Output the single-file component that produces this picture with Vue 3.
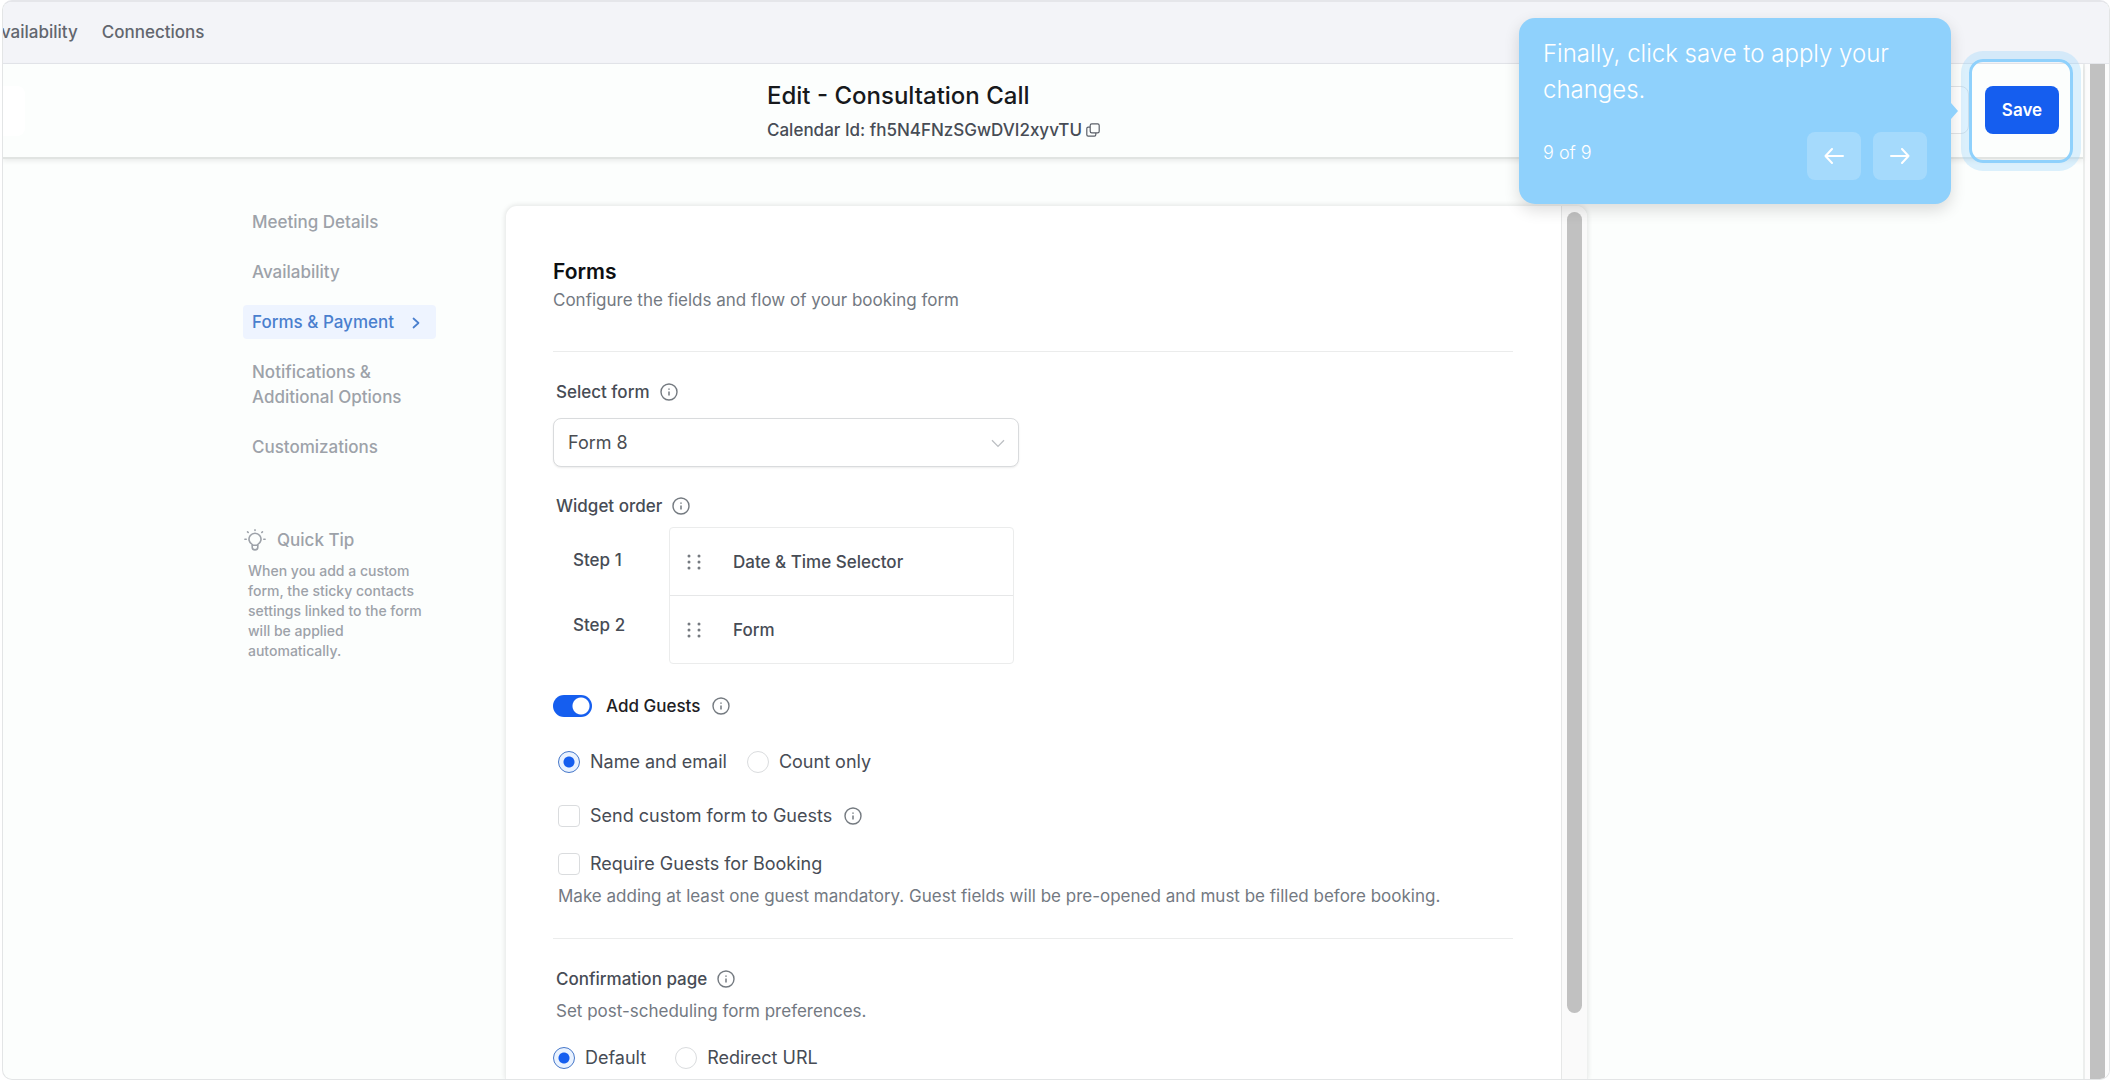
<script setup>
import { ref } from 'vue'

const navItems = ['Meeting Details', 'Availability', 'Forms & Payment', 'Notifications & Additional Options', 'Customizations']
const activeItem = 'Forms & Payment'
const widgets = ['Date & Time Selector', 'Form']
const selectedForm = ref('Form 8')
const addGuests = ref(true)
const guestMode = ref('name')
const sendCustom = ref(false)
const requireGuests = ref(false)
const confirmation = ref('default')
</script>

<template>
  <div class="frame">
    <svg class="defs" aria-hidden="true">
      <symbol id="info" viewBox="0 0 18 18">
        <circle cx="9" cy="9" r="8" fill="none" stroke="currentColor" stroke-width="1.4" />
        <path d="M9 8.4V12.4M9 5.4V6.8" fill="none" stroke="currentColor" stroke-width="1.5" />
      </symbol>
    </svg>

    <nav class="topnav">
      <a href="#" class="cut">Availability</a>
      <a href="#">Connections</a>
    </nav>

    <div class="viewport">
      <div class="page">
        <header class="header">
          <button class="back" aria-label="Back"></button>
          <div class="heading">
            <h1>Edit - Consultation Call</h1>
            <p>
              Calendar Id: fh5N4FNzSGwDVI2xyvTU
              <button class="copy" aria-label="Copy calendar id">
                <svg width="14" height="14" viewBox="0 0 14 14" fill="none" stroke="currentColor" stroke-width="1.2">
                  <rect x="4.2" y="0.8" width="9" height="9" rx="1.6" />
                  <path d="M4 4.2H2.2Q.8 4.2 .8 5.6V11.8Q.8 13.2 2.2 13.2H8.4Q9.8 13.2 9.8 11.8V10" />
                </svg>
              </button>
            </p>
          </div>
          <div class="actions">
            <button class="cancel" aria-label="Cancel"></button>
            <div class="save-wrap">
              <button class="save">Save</button>
              <span class="ring"></span>
            </div>
          </div>
        </header>

        <main class="main">
          <aside class="sidebar">
            <ul>
              <li v-for="item in navItems" :key="item">
                <a href="#" :class="{ active: item === activeItem }">
                  <span>{{ item }}</span>
                  <svg v-if="item === activeItem" width="8" height="12" viewBox="0 0 8 12" fill="none" stroke="currentColor" stroke-width="1.7" stroke-linecap="round" stroke-linejoin="round">
                    <path d="M1.5 1.5L6.5 6L1.5 10.5" />
                  </svg>
                </a>
              </li>
            </ul>
            <section class="tip">
              <h2>
                <svg width="22" height="22" viewBox="0 0 22 22" fill="none" stroke="currentColor" stroke-width="1.6" stroke-linecap="round" stroke-linejoin="round">
                  <path d="M8.4 16.2V15.6A6 6 0 1 1 13.6 15.6V16.2" />
                  <path d="M8.2 16.2H13.8V18.4Q13.6 20.9 11 20.9Q8.4 20.9 8.2 18.4Z" />
                  <path d="M11 .9V1.4M.9 10.2H2.2M19.8 10.2H21.1M3.6 2.9L4.2 3.5M18.4 2.9L17.8 3.5" />
                </svg>
                Quick Tip
              </h2>
              <p>When you add a custom form, the sticky contacts settings linked to the form will be applied automatically.</p>
            </section>
          </aside>

          <div class="card">
            <div class="content">
              <h2 class="title">Forms</h2>
              <p class="muted">Configure the fields and flow of your booking form</p>
              <hr class="first" />

              <div class="label">
                <label for="form">Select form</label>
                <svg class="info"><use href="#info" /></svg>
              </div>
              <div class="select">
                <select id="form" v-model="selectedForm">
                  <option>Form 8</option>
                </select>
                <svg width="14" height="9" viewBox="0 0 14 9" fill="none" stroke="currentColor" stroke-width="1.3">
                  <path d="M1 1.2L7 7.4L13 1.2" />
                </svg>
              </div>

              <div class="label widget-label">
                <span>Widget order</span>
                <svg class="info"><use href="#info" /></svg>
              </div>
              <div class="order">
                <div class="steps">
                  <span>Step 1</span>
                  <span>Step 2</span>
                </div>
                <ul class="widgets">
                  <li v-for="w in widgets" :key="w">
                    <svg width="14" height="16" viewBox="0 0 14 16" fill="currentColor">
                      <circle cx="2" cy="2" r="1.5" /><circle cx="12" cy="2" r="1.5" />
                      <circle cx="2" cy="8" r="1.5" /><circle cx="12" cy="8" r="1.5" />
                      <circle cx="2" cy="14" r="1.5" /><circle cx="12" cy="14" r="1.5" />
                    </svg>
                    {{ w }}
                  </li>
                </ul>
              </div>

              <div class="row guests">
                <input id="guests" v-model="addGuests" class="switch" type="checkbox" role="switch" />
                <label for="guests">Add Guests</label>
                <svg class="info"><use href="#info" /></svg>
              </div>

              <div class="row inset modes">
                <input id="m-name" v-model="guestMode" type="radio" value="name" />
                <label for="m-name">Name and email</label>
                <input id="m-count" v-model="guestMode" type="radio" value="count" />
                <label for="m-count">Count only</label>
              </div>
              <div class="row inset send">
                <input id="send" v-model="sendCustom" type="checkbox" />
                <label for="send">Send custom form to Guests</label>
                <svg class="info"><use href="#info" /></svg>
              </div>
              <div class="row inset require">
                <input id="require" v-model="requireGuests" type="checkbox" />
                <label for="require">Require Guests for Booking</label>
              </div>
              <p class="muted inset require-note">Make adding at least one guest mandatory. Guest fields will be pre-opened and must be filled before booking.</p>
              <hr class="second" />

              <div class="label">
                <span>Confirmation page</span>
                <svg class="info"><use href="#info" /></svg>
              </div>
              <p class="muted note">Set post-scheduling form preferences.</p>
              <div class="row confirm">
                <input id="c-default" v-model="confirmation" type="radio" value="default" />
                <label for="c-default">Default</label>
                <input id="c-url" v-model="confirmation" type="radio" value="url" />
                <label for="c-url">Redirect URL</label>
              </div>
            </div>
            <div class="card-scroll"><div class="thumb"></div></div>
          </div>
        </main>
      </div>
      <div class="page-scroll"><div class="thumb"></div></div>
    </div>

    <div class="coach" role="dialog" aria-label="Tour">
      <p>Finally, click save to apply your changes.</p>
      <div class="coach-foot">
        <span>9 of 9</span>
        <div class="coach-buttons">
          <button aria-label="Previous">
            <svg width="20" height="16" viewBox="0 0 20 16"><path d="M19 8H1.5M8 1L1.5 8L8 15" /></svg>
          </button>
          <button aria-label="Next">
            <svg width="20" height="16" viewBox="0 0 20 16"><path d="M1 8H18.5M12 1L18.5 8L12 15" /></svg>
          </button>
        </div>
      </div>
    </div>
  </div>
</template>

<style>
body { background: #fff; }
</style>

<style scoped>
* { box-sizing: border-box; }
h1, h2, p, ul { margin: 0; padding: 0; }
ul { list-style: none; }
button { border: 0; padding: 0; background: none; color: inherit; font: inherit; }
a { color: inherit; text-decoration: none; }

.frame {
  position: relative;
  display: flex;
  flex-direction: column;
  height: 100vh;
  margin: 0 2px;
  border: 1px solid #e3e5e6;
  border-top: 2px solid #e5e6ea;
  border-radius: 10px;
  overflow: hidden;
  background: #fcfefd;
  color: #474c55;
  font: 500 17px/24px Inter, "Liberation Sans", sans-serif;
}
.defs { position: absolute; width: 0; height: 0; }

.topnav {
  display: flex;
  flex: none;
  align-items: center;
  gap: 24px;
  height: 62px;
  padding-bottom: 2px;
  border-bottom: 1px solid #e4e6eb;
  background: #f3f4f8;
  color: #62666e;
}
.cut { margin-left: -13px; }

.viewport { display: flex; flex: 1; min-height: 0; }
.page { display: flex; flex: 1; flex-direction: column; min-width: 0; }
.page-scroll {
  width: 26px;
  padding: 0 4px 0 5px;
  border-left: 2px solid #eceeed;
  background: #fcfcfc;
}
.page-scroll .thumb { height: 100%; background: #c1c1c1; }

.header {
  position: relative;
  display: flex;
  flex: none;
  align-items: center;
  height: 95px;
  border-bottom: 2px solid #e1e4e2;
  box-shadow: 0 2px 5px rgba(0, 0, 0, 0.08);
}
.back { width: 22px; height: 50px; border-radius: 0 8px 8px 0; background: #fff; }
.heading { margin: 2px 0 0 742px; }
h1 { color: #17191c; font-size: 24px; font-weight: 500; line-height: 36px; }
.heading p { display: flex; align-items: center; gap: 4px; line-height: 32px; }
.copy { display: flex; color: #5a5f68; }
.actions { display: flex; gap: 16px; margin: 0 0 2px auto; padding-right: 24px; }
.cancel { width: 96px; height: 48px; border: 1px solid #e2e4e6; border-radius: 8px; background: #fff; }
.save-wrap { position: relative; }
.save { width: 74px; height: 48px; border-radius: 8px; background: #155eef; color: #fff; font-size: 17px; font-weight: 600; }
.ring {
  position: absolute;
  inset: -27px -14px -29px -16px;
  border: 3px solid #8fd1fc;
  border-radius: 14px;
  box-shadow: 0 0 0 8px rgba(143, 209, 252, 0.3);
}

.main { display: flex; flex: 1; gap: 69px; min-height: 0; padding: 46px 0 0 240px; }
.sidebar { flex: none; width: 193px; color: #9da2a9; }
.sidebar li { margin-bottom: 16px; }
.sidebar a { display: flex; align-items: center; justify-content: space-between; padding: 5px 16px 4px 9px; line-height: 25px; border-radius: 4px; }
.sidebar .active { background: #eef4ff; color: #4a7fce; }
.tip { margin-top: 64px; }
.tip h2 { display: flex; align-items: center; gap: 11px; font-size: 17px; font-weight: 500; line-height: 24px; }
.tip svg { margin-left: 1px; }
.tip p { margin-top: 9px; padding: 0 6px 0 5px; font-size: 14px; line-height: 20px; }

.card {
  display: flex;
  flex: 1;
  max-width: 1083px;
  border: 1px solid #eef0ef;
  border-bottom: 0;
  border-radius: 12px 12px 0 0;
  background: #fff;
  box-shadow: 0 0 5px rgba(0, 0, 0, 0.1);
  overflow: hidden;
}
.content { flex: 1; min-width: 0; padding: 52px 48px 0 47px; }
.card-scroll { width: 26px; padding: 6px 5px; border-left: 1px solid #e6e7e7; background: #fafafa; }
.card-scroll .thumb { height: 802px; max-height: 93%; border-radius: 8px; background: #c1c1c1; }

.title { color: #0d0f12; font-size: 21px; font-weight: 600; line-height: 28px; }
.muted { color: #737982; font-weight: 400; }
.title + .muted { margin-top: 2px; }
hr { height: 1px; margin: 0; border: 0; background: #ebecec; }
.first { margin: 39px 0 28px; }
.second { margin: 30px 0 28px; }
.label { display: flex; align-items: center; gap: 10px; padding-left: 3px; }
.info { width: 18px; height: 18px; color: #747a80; }

.select { position: relative; width: 466px; margin-top: 14px; }
.select select {
  display: block;
  width: 100%;
  height: 49px;
  padding: 0 14px;
  appearance: none;
  border: 1px solid #d9dbdd;
  border-radius: 8px;
  background: #fff;
  color: #4a4d52;
  font: 400 18px/24px Inter, "Liberation Sans", sans-serif;
  box-shadow: 0 1px 2px rgba(0, 0, 0, 0.08);
}
.select svg { position: absolute; top: 21px; right: 14px; color: #bcbfc3; }

.widget-label { margin-top: 27px; }
.order { display: flex; margin-top: 9px; }
.steps { display: flex; flex-direction: column; gap: 41px; width: 116px; padding: 21px 0 0 20px; }
.widgets { width: 345px; border: 1px solid #ebecec; border-radius: 4px; }
.widgets li { display: flex; align-items: center; gap: 32px; height: 67px; padding-left: 17px; }
.widgets li + li { border-top: 1px solid #e6e7e8; height: 68px; }
.widgets svg { color: #757a80; }

.row { display: flex; align-items: center; height: 24px; font-size: 18px; font-weight: 400; }
.row label { padding-left: 10px; }
.row .info { margin-left: 12px; }
.inset { padding-left: 5px; }
.guests { margin-top: 30px; font-size: 17px; font-weight: 500; color: #1d2024; }
.guests label { padding-left: 14px; }
.modes { margin-top: 32px; }
.modes label { padding-right: 20px; }
.send { margin-top: 30px; }
.require { margin-top: 24px; }
.require-note { margin-top: 8px; }
.note { margin-top: 8px; padding-left: 3px; }
.confirm { margin-top: 23px; }
.confirm label { padding-right: 29px; }

.row input { flex: none; width: 22px; height: 22px; margin: 0; appearance: none; border: 1px solid #dadcde; border-radius: 4px; background: #fff; }
.row input[type="radio"] { border-radius: 50%; }
.row input[type="radio"]:checked { border-color: #4577c9; background: radial-gradient(circle, #155eef 0 5px, #e9f2ff 6px); }
.row .switch { width: 39px; height: 22px; border: 0; border-radius: 11px; background: radial-gradient(circle at 28px 11px, #fff 0 8px, #155eef 9px); }

.coach {
  position: absolute;
  top: 16px;
  right: 158px;
  width: 432px;
  padding: 18px 24px 24px;
  border-radius: 16px;
  background: #8fd1fc;
  color: #fff;
  font-weight: 300;
  box-shadow: 0 6px 16px rgba(0, 0, 0, 0.14);
}
.coach::after {
  content: "";
  position: absolute;
  top: 85px;
  left: 100%;
  border: 8px solid transparent;
  border-left: 7px solid #8fd1fc;
  border-right: 0;
}
.coach p { font-size: 24px; line-height: 36px; }
.coach-foot { display: flex; justify-content: space-between; margin-top: 24px; }
.coach-foot span { padding-top: 9px; font-size: 18px; }
.coach-buttons { display: flex; gap: 12px; }
.coach-buttons button { display: flex; align-items: center; justify-content: center; width: 54px; height: 48px; border-radius: 8px; background: rgba(255, 255, 255, 0.2); }
.coach-buttons path { fill: none; stroke: #fff; stroke-width: 2; stroke-linecap: round; stroke-linejoin: round; }
</style>
